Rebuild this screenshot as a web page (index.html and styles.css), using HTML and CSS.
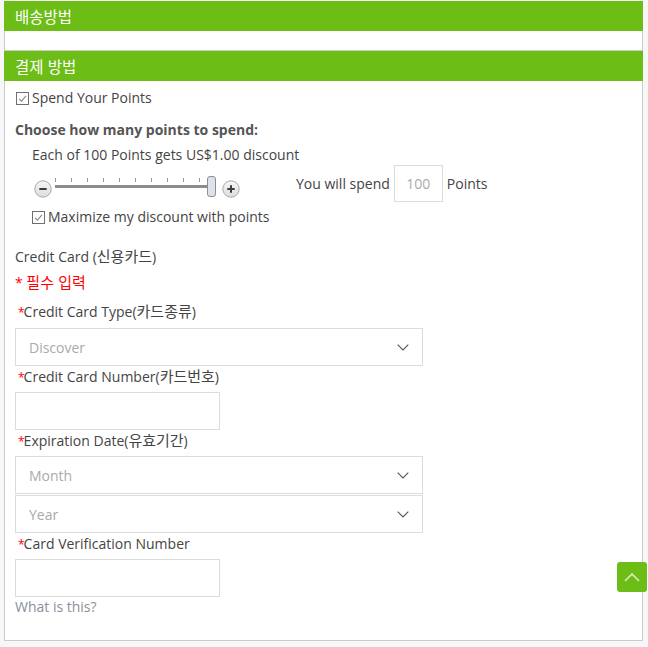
FILE: index.html
```html
<!DOCTYPE html>
<html lang="ko">
<head>
<meta charset="utf-8">
<title>결제</title>
<link rel="stylesheet" href="styles.css">
</head>
<body>
<div class="page">
  <section class="panel">
    <h2 class="panel-head">배송방법</h2>
    <div class="panel-body panel-body--empty"></div>
  </section>

  <section class="panel">
    <h2 class="panel-head">결제 방법</h2>
    <div class="panel-body">
      <label class="check">
        <svg class="check-box" width="13" height="13" viewBox="0 0 13 13"><rect x="0.5" y="0.5" width="12" height="12" fill="#fff" stroke="#6f6f6f"/><path d="M3 6.8 L5.4 9.2 L10 3.8" fill="none" stroke="#8a8a8a" stroke-width="1.1"/></svg>
        <span>Spend Your Points</span>
      </label>

      <p class="choose">Choose how many points to spend:</p>
      <p class="rate">Each of 100 Points gets US$1.00 discount</p>

      <div class="slider-row">
        <div class="slider">
          <span class="round-btn">
            <svg width="18" height="18" viewBox="0 0 18 18"><defs><linearGradient id="g" x1="0" y1="0" x2="0" y2="1"><stop offset="0" stop-color="#f7f7f7"/><stop offset="1" stop-color="#dcdcdc"/></linearGradient></defs><circle cx="9" cy="9" r="8.2" fill="url(#g)" stroke="#a9a9a9"/><path d="M5.3 9 H12.7" stroke="#3d3d3d" stroke-width="2"/></svg>
          </span>
          <div class="track">
            <div class="ticks">
              <i></i><i></i><i></i><i></i><i></i><i></i><i></i><i></i><i></i><i></i>
            </div>
            <div class="rail"></div>
            <span class="handle"></span>
          </div>
          <span class="round-btn">
            <svg width="18" height="18" viewBox="0 0 18 18"><circle cx="9" cy="9" r="8.2" fill="url(#g)" stroke="#a9a9a9"/><path d="M5.3 9 H12.7 M9 5.3 V12.7" stroke="#3d3d3d" stroke-width="2"/></svg>
          </span>
        </div>
        <span class="spend-text">You will spend</span>
        <input class="points-input" type="text" value="100">
        <span class="spend-text">Points</span>
      </div>

      <label class="check check--indent">
        <svg class="check-box" width="13" height="13" viewBox="0 0 13 13"><rect x="0.5" y="0.5" width="12" height="12" fill="#fff" stroke="#6f6f6f"/><path d="M3 6.8 L5.4 9.2 L10 3.8" fill="none" stroke="#8a8a8a" stroke-width="1.1"/></svg>
        <span>Maximize my discount with points</span>
      </label>

      <p class="cc-title">Credit Card (<span class="ko">신용카드</span>)</p>
      <p class="required-note">* <span class="ko">필수 입력</span></p>

      <p class="field-label"><span class="star">*</span>Credit Card Type(<span class="ko">카드종류</span>)</p>
      <div class="select">
        <select><option>Discover</option></select>
        <svg class="chev" width="12" height="7" viewBox="0 0 12 7"><path d="M0.7 0.7 L6 6 L11.3 0.7" fill="none" stroke="#555" stroke-width="1.1"/></svg>
      </div>

      <p class="field-label field-label--tight"><span class="star">*</span>Credit Card Number(<span class="ko">카드번호</span>)</p>
      <input class="text-input" type="text">

      <p class="field-label field-label--tight"><span class="star">*</span>Expiration Date(<span class="ko">유효기간</span>)</p>
      <div class="select select--close">
        <select><option>Month</option></select>
        <svg class="chev" width="12" height="7" viewBox="0 0 12 7"><path d="M0.7 0.7 L6 6 L11.3 0.7" fill="none" stroke="#555" stroke-width="1.1"/></svg>
      </div>
      <div class="select select--stacked">
        <select><option>Year</option></select>
        <svg class="chev" width="12" height="7" viewBox="0 0 12 7"><path d="M0.7 0.7 L6 6 L11.3 0.7" fill="none" stroke="#555" stroke-width="1.1"/></svg>
      </div>

      <p class="field-label field-label--tight"><span class="star">*</span>Card Verification Number</p>
      <input class="text-input" type="text">
      <p class="what">What is this?</p>
    </div>
  </section>
</div>

<a class="to-top" href="#" aria-label="맨 위로">
  <svg width="16" height="9" viewBox="0 0 16 9"><path d="M1 8 L8 1 L15 8" fill="none" stroke="rgba(255,255,255,0.75)" stroke-width="1.6"/></svg>
</a>
</body>
</html>
```

FILE: styles.css
```css
* { box-sizing: border-box; }

html, body {
  margin: 0;
  padding: 0;
}

body {
  background: #f7f7f7;
  font-family: "Open Sans", "Noto Sans CJK KR", sans-serif;
  font-size: 14px;
  color: #444;
  line-height: 20px;
}

p {
  margin: 0;
  height: 20px;
  white-space: nowrap;
}

.ko {
  font-family: "Noto Sans CJK KR", sans-serif;
  font-size: 15px;
  line-height: 1;
}

.page {
  padding: 1px 5px 0 4px;
}

.panel-head {
  margin: 0;
  height: 30px;
  background: #6cbd16;
  color: #fff;
  font-weight: normal;
  font-size: 15.5px;
  line-height: 30px;
  padding-left: 11px;
  font-family: "Noto Sans CJK KR", "Open Sans", sans-serif;
}

.panel-body {
  background: #fff;
  border: 1px solid #cbcbcb;
  border-top: none;
  padding: 7px 10px 23px 10px;
}

.panel-body--empty {
  height: 20px;
  padding: 0;
}

.check {
  display: flex;
  align-items: center;
  gap: 3px;
  height: 20px;
}

.check-box { flex: none; margin-left: 1px; }

.check--indent {
  padding-left: 16px;
  margin-top: 5px;
}

.choose {
  margin-top: 12px;
  font-weight: bold;
  color: #555;
}

.rate {
  margin-top: 5px;
  padding-left: 17px;
}

.slider-row {
  display: flex;
  align-items: center;
  height: 37px;
  padding-left: 19px;
}

.slider {
  align-self: flex-start;
  margin-top: 11px;
  width: 262px;
  display: flex;
  align-items: flex-end;
  height: 22px;
}

.round-btn {
  display: flex;
  width: 18px;
  height: 18px;
}

.track {
  position: relative;
  width: 165px;
  height: 22px;
  margin: 0 2px 0 3px;
}

.ticks {
  display: flex;
  justify-content: space-between;
  width: 145px;
  margin-top: 2px;
  height: 4px;
}

.ticks i {
  display: block;
  width: 1px;
  height: 4px;
  background: #9a9a9a;
}

.rail {
  margin-top: 3px;
  height: 3px;
  width: 156px;
  background: #8c8c8c;
}

.handle {
  position: absolute;
  left: 152px;
  top: 0;
  width: 9px;
  height: 21px;
  border: 1px solid #8f8f8f;
  border-radius: 3px;
  background: #dde3ea;
}

.spend-text {
  color: #444;
}

.points-input {
  width: 49px;
  height: 37px;
  margin: 0 4px;
  border: 1px solid #dcdcdc;
  font-family: inherit;
  font-size: 14px;
  color: #aaa;
  text-align: center;
  padding: 0;
}

.cc-title {
  margin-top: 20px;
}

.required-note {
  margin-top: 6px;
  color: #f00;
}

.field-label {
  margin-top: 9px;
}

.field-label--tight {
  margin-top: 1px;
}

.star {
  color: #f00;
  font-size: 12px;
  margin-left: 3px;
  margin-right: -1px;
}

.select {
  position: relative;
  width: 408px;
  margin-top: 6px;
}

.select--close {
  margin-top: 5px;
}

.select--stacked {
  margin-top: 1px;
}

.select select {
  appearance: none;
  -webkit-appearance: none;
  display: block;
  width: 100%;
  height: 38px;
  border: 1px solid #dcdcdc;
  border-radius: 0;
  background: #fff;
  padding: 0 13px;
  font-family: inherit;
  font-size: 14px;
  color: #aaa;
}

.chev {
  position: absolute;
  right: 14px;
  top: 16px;
  pointer-events: none;
}

.text-input {
  display: block;
  width: 205px;
  height: 38px;
  margin-top: 5px;
  border: 1px solid #dcdcdc;
  padding: 0 8px;
  font-family: inherit;
  font-size: 14px;
}

.what {
  color: #8a8f9b;
}

.to-top {
  position: fixed;
  left: 617px;
  top: 562px;
  width: 30px;
  height: 30px;
  border-radius: 3px;
  background: #6cbd16;
  display: flex;
  align-items: center;
  justify-content: center;
}
```
